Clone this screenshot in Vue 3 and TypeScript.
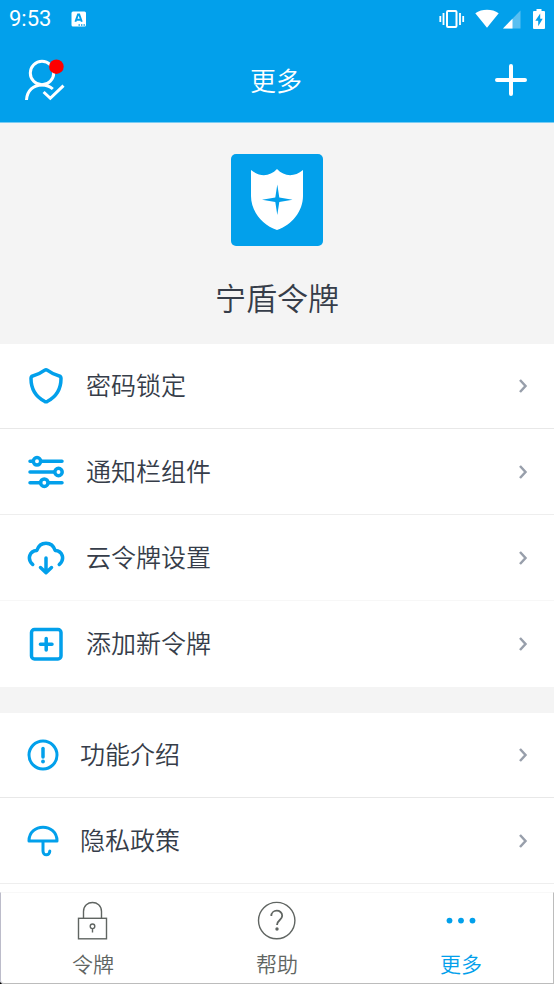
<script setup lang="ts">
interface Row {
  icon: string
  label: string
}

const tokenRows: Row[] = [
  { icon: 'shield', label: '密码锁定' },
  { icon: 'sliders', label: '通知栏组件' },
  { icon: 'cloud', label: '云令牌设置' },
  { icon: 'add', label: '添加新令牌' },
]

const aboutRows: Row[] = [
  { icon: 'notice', label: '功能介绍' },
  { icon: 'umbrella', label: '隐私政策' },
]

const groups = [
  { name: 'token', rows: tokenRows },
  { name: 'about', rows: aboutRows },
]

const tabs = [
  { icon: 'lock', label: '令牌', active: false },
  { icon: 'help', label: '帮助', active: false },
  { icon: 'more', label: '更多', active: true },
]
</script>

<template>
  <div class="screen">
    <header class="top">
      <div class="status">
        <span class="time">9:53</span>
        <svg class="keyboard" width="16" height="16" viewBox="0 0 16 16" aria-hidden="true">
          <rect x="0.5" y="0.5" width="14.5" height="15" rx="1.5" fill="#fff" />
          <path d="M4.400 10.800 7 3.500h1.200l2.600 7.300M5.300 8.700h4.600" fill="none" stroke="#02a0eb" stroke-width="1.900" />
          <path d="M7.500 14h1.400M10 14h1.400M12.500 14h1.400" stroke="#02a0eb" stroke-width="1.400" />
        </svg>
        <div class="signals">
          <svg width="26" height="20" viewBox="0 0 26 20" aria-hidden="true">
            <rect x="8" y="2" width="9.500" height="16" rx="1" fill="none" stroke="#fff" stroke-width="2" />
            <path d="M4.500 4v12M21 4v12M1.300 7v6M24.200 7v6" stroke="#fff" stroke-width="1.800" />
          </svg>
          <svg class="wifi" width="24" height="20" viewBox="0 0 24 20" aria-hidden="true">
            <path d="M0.300 4.300C6.800-.3 17.200-.3 23.700 4.300L12 18.800Z" fill="#fff" />
          </svg>
          <svg class="cell" width="18" height="20" viewBox="0 0 18 20" aria-hidden="true">
            <path d="M17.500 1.500V19.500H0Z" fill="#59bff1" />
            <path d="M9.500 9.700V19.500H0Z" fill="#fff" />
          </svg>
          <svg class="battery" width="12" height="20" viewBox="0 0 12 20" aria-hidden="true">
            <path d="M3.500 0h5v2H11a1 1 0 0 1 1 1v16a1 1 0 0 1-1 1H1a1 1 0 0 1-1-1V3a1 1 0 0 1 1-1h2.500Z" fill="#fff" />
            <path d="M7.200 4.500 2.300 11.800H5.200V17.300L9.700 9.800H7.200Z" fill="#02a0eb" />
          </svg>
        </div>
      </div>
      <nav class="bar">
        <button type="button" class="bar-button" aria-label="账户">
          <svg width="42" height="44" viewBox="0 0 42 44" aria-hidden="true">
            <g fill="none" stroke="#fff" stroke-width="3">
              <circle cx="18" cy="15" r="11.700" />
              <path d="M2.500 42C3 32.500 9.500 27 18 27c4.500 0 8 1.500 10.800 4" />
              <path d="M19.600 34 26.300 40.300 39.500 27.600" />
            </g>
            <circle cx="32.400" cy="8.700" r="7.300" fill="#fe0000" />
          </svg>
        </button>
        <h1 class="title">更多</h1>
        <button type="button" class="bar-button" aria-label="添加">
          <svg width="34" height="34" viewBox="0 0 34 34" aria-hidden="true">
            <path d="M17 3v28M3 17h28" stroke="#fff" stroke-width="4" stroke-linecap="round" />
          </svg>
        </button>
      </nav>
    </header>

    <main class="content">
      <section class="hero">
        <svg class="logo" width="92" height="92" viewBox="0 0 92 92" aria-hidden="true">
          <rect width="92" height="92" rx="5" fill="#02a0eb" />
          <path
            d="M20 16C29 23.500 39 22.500 46 15C53 22.500 63 23.500 72 16V42C72 57 61 71 46 76C31 71 20 57 20 42Z"
            fill="#fff"
          />
          <path
            d="M46.300 30.500 48.300 43.500 61.500 45.700 48.300 47.900 46.300 61 44.300 47.900 31 45.700 44.300 43.500Z"
            fill="#02a0eb"
          />
        </svg>
        <h2 class="app-name">宁盾令牌</h2>
      </section>

      <ul v-for="group in groups" :key="group.name" class="group" :class="group.name">
        <li v-for="row in group.rows" :key="row.label" class="item">
          <a href="#" class="row">
            <svg
              v-if="group.name === 'token'"
              class="row-icon"
              width="38"
              height="38"
              viewBox="0 0 38 38"
              aria-hidden="true"
            >
              <path
                v-if="row.icon === 'shield'"
                d="M17.800 3.200Q19 2.400 20.200 3.200C24 6 28 8 32.300 9Q34 9.500 34 11.500C34 21.500 29.500 29.500 20.500 34.300Q19 35 17.500 34.300C8.500 29.500 4 21.500 4 11.500Q4 9.500 5.700 9C10 8 14 6 17.800 3.200Z"
              />
              <g v-else-if="row.icon === 'sliders'">
                <path d="M3 8.300h3M14 8.300h21M3 19h24M3 29.700h10.500M21.500 29.700H35" />
                <circle cx="10" cy="8.300" r="3.700" />
                <circle cx="31.500" cy="19" r="3.700" />
                <circle cx="17.300" cy="29.700" r="3.700" />
              </g>
              <g v-else-if="row.icon === 'cloud'">
                <path d="M5.700 25.500C-.3 20 2.500 12 9.800 11.500C13 1.800 25 1.800 28.200 11.500C35.500 12 38.300 20 32.300 25.500" />
                <path d="M19 19v14.500M13.500 28.500 19 33.700 24.500 28.500" />
              </g>
              <g v-else>
                <rect x="4.500" y="4.500" width="29.500" height="29.500" rx="3" />
                <path d="M19.200 13.500v11.500M13.400 19.300h11.600" />
              </g>
            </svg>
            <svg v-else class="row-icon" width="32" height="32" viewBox="0 0 32 32" aria-hidden="true">
              <g v-if="row.icon === 'notice'" stroke-width="3">
                <circle cx="16" cy="16" r="14" />
                <path d="M16 9.500v8.500" stroke-width="3.500" />
                <circle cx="16" cy="22.500" r="1.900" fill="#02a0eb" stroke="none" />
              </g>
              <g v-else stroke-width="3">
                <path d="M2 16C2-2.300 30-2.300 30 16Z" />
                <path d="M16 17v9C16 31.300 22.800 31 22.800 26" />
              </g>
            </svg>
            <span class="row-label">{{ row.label }}</span>
            <svg class="chevron" width="10" height="16" viewBox="0 0 10 16" aria-hidden="true">
              <path d="M2 2 7.500 8 2 14" fill="none" stroke="#989fab" stroke-width="2.500" />
            </svg>
          </a>
        </li>
      </ul>
    </main>

    <nav class="tabs">
      <a v-for="tab in tabs" :key="tab.label" href="#" class="tab" :class="{ active: tab.active }">
        <svg width="40" height="40" viewBox="0 0 40 40" aria-hidden="true">
          <g v-if="tab.icon === 'lock'" fill="none" stroke="currentColor" stroke-width="1.400">
            <rect x="5.500" y="17.300" width="28" height="20.500" />
            <path d="M10.500 17.300V10.500C10.500-1.500 28.500-1.500 28.500 10.500v6.800" />
            <circle cx="19.500" cy="25.300" r="2.300" />
            <path d="M19.500 27.600v4" />
          </g>
          <g v-else-if="tab.icon === 'help'" fill="none" stroke="currentColor" stroke-width="1.400">
            <circle cx="19.700" cy="19.600" r="18.200" />
            <path d="M14.300 15C14.300 8 25.200 8 25.200 14.800C25.200 19 20 19 20 24" stroke-width="1.800" />
            <circle cx="20" cy="28" r="1.700" fill="currentColor" stroke="none" />
          </g>
          <g v-else fill="currentColor">
            <circle cx="8.500" cy="19.600" r="2.900" />
            <circle cx="20" cy="19.600" r="2.900" />
            <circle cx="31.500" cy="19.600" r="2.900" />
          </g>
        </svg>
        <span>{{ tab.label }}</span>
      </a>
    </nav>
  </div>
</template>

<style>
body {
  margin: 0;
  background: #000;
}
</style>

<style scoped>
.screen {
  display: flex;
  flex-direction: column;
  height: 100vh;
  overflow: hidden;
  border-bottom-left-radius: 4px;
  background: #fff;
  color: #363d49;
  font-family: 'Noto Sans CJK SC', sans-serif;
  font-weight: 350;
}

.top {
  flex: none;
  border-bottom: 1px solid #7accf3;
  background: #02a0eb;
  color: #fff;
}

.status {
  display: flex;
  align-items: center;
  height: 38px;
  padding: 0 9px;
}

.time {
  font: 400 22px/24px Roboto, sans-serif;
}

.keyboard {
  margin-left: 20px;
}

.signals {
  display: flex;
  align-items: center;
  margin-left: auto;
}

.wifi {
  margin-left: 10px;
}

.cell {
  margin-left: 4px;
}

.battery {
  margin-left: 12px;
}

.bar {
  display: grid;
  grid-template-columns: 1fr auto 1fr;
  align-items: center;
  height: 84px;
  padding: 0 26px 0 24px;
}

.bar-button {
  display: flex;
  padding: 0;
  border: 0;
  background: none;
}

.bar-button:last-child {
  justify-self: end;
}

.title {
  margin: 0;
  font-size: 26px;
  font-weight: inherit;
  line-height: 40px;
}

.content {
  flex: 1;
  min-height: 0;
  overflow: hidden;
}

.hero {
  display: flex;
  flex-direction: column;
  align-items: center;
  gap: 27px;
  padding: 31px 0 23px;
  background: #f4f4f4;
}

.app-name {
  margin: 0;
  font-size: 31px;
  font-weight: inherit;
  line-height: 48px;
}

.group {
  margin: 0;
  padding: 0;
  list-style: none;
}

.group + .group {
  border-top: 26px solid #f4f4f4;
}

.item {
  box-sizing: border-box;
  height: 86px;
  border-bottom: 1px solid #eee;
}

.item:first-child {
  height: 85px;
  border-bottom-color: #e8e8e8;
}

.item:nth-child(3) {
  border-bottom-color: #f7f7f7;
}

.token .item:last-child {
  border-bottom: 0;
}

.row {
  display: flex;
  align-items: center;
  height: 100%;
  padding: 0 26px 0 27px;
  color: inherit;
  text-decoration: none;
}

.row-icon {
  flex: none;
  fill: none;
  stroke: #02a0eb;
  stroke-width: 3.5;
  stroke-linecap: round;
  stroke-linejoin: round;
}

.row-label {
  margin-left: 21px;
  padding-bottom: 4px;
  font-size: 25px;
  line-height: 38px;
}

.chevron {
  margin-left: auto;
}

.tabs {
  display: flex;
  flex: none;
  box-sizing: border-box;
  height: 92px;
  border: 1px solid #bcbcbc;
  border-top-color: #f8f8f8;
  border-left-color: #bcbcca;
  border-bottom-left-radius: 4px;
  background: #fff;
}

.tab {
  display: flex;
  flex: 1;
  flex-direction: column;
  align-items: center;
  gap: 6px;
  padding-top: 8px;
  color: #606562;
  font-size: 21px;
  line-height: 32px;
  text-decoration: none;
}

.tab.active {
  color: #02a0eb;
}
</style>
